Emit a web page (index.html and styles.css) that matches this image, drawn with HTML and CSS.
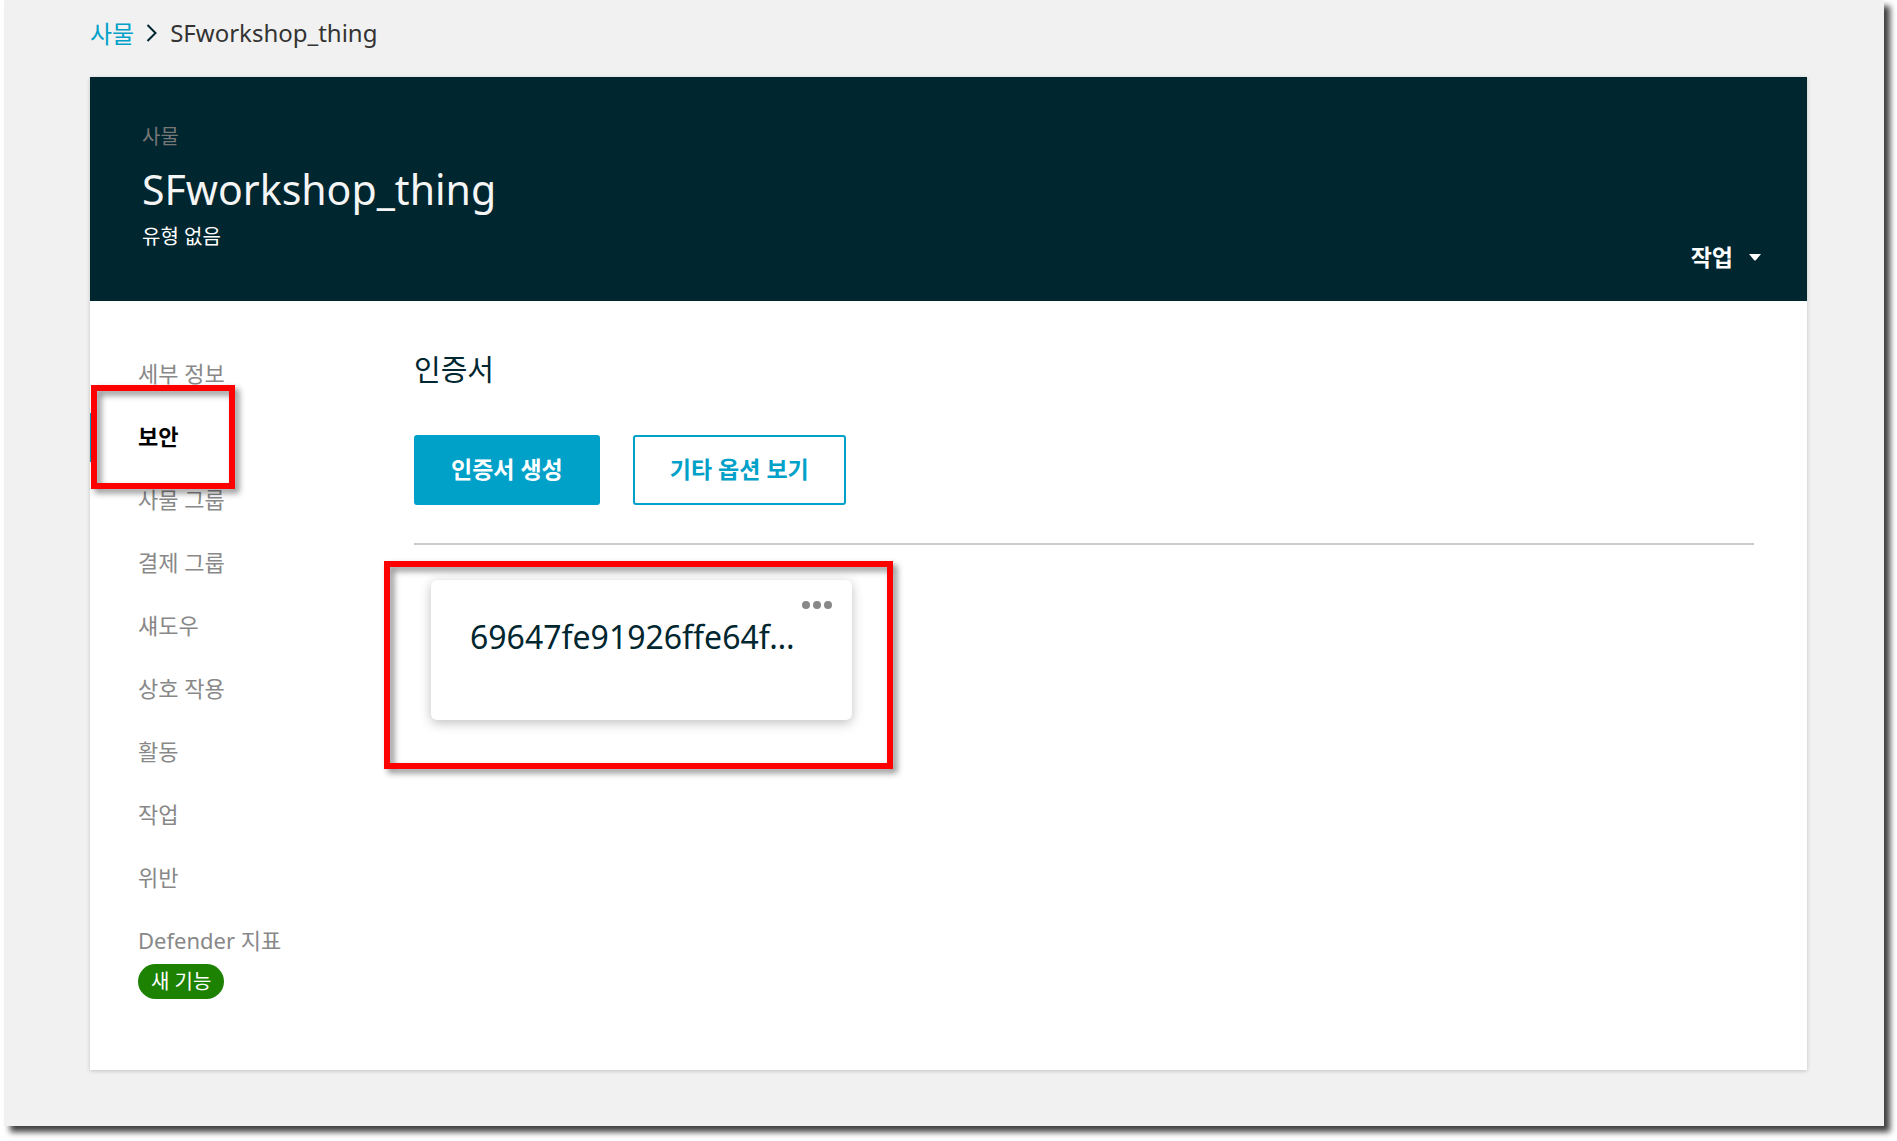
FILE: index.html
```html
<!DOCTYPE html>
<html lang="ko">
<head>
<meta charset="utf-8">
<meta name="viewport" content="width=device-width, initial-scale=1">
<title>SFworkshop_thing</title>
<link rel="stylesheet" href="styles.css">
</head>
<body>
<div class="frame">
  <nav class="breadcrumb" aria-label="이동 경로">
    <a href="#">사물</a>
    <svg class="chevron" viewBox="0 0 12 20" aria-hidden="true"><path d="M1.5 2 L9.5 10 L1.5 18"/></svg>
    <span>SFworkshop_thing</span>
  </nav>
  <main class="panel">
    <header class="hero">
      <div>
        <p class="hero-kind">사물</p>
        <h1 class="hero-title">SFworkshop_thing</h1>
        <p class="hero-type">유형 없음</p>
      </div>
      <button class="actions" type="button">작업
        <svg class="caret" viewBox="0 0 12 7" aria-hidden="true"><path d="M0 0H12L7 6Q6 7 5 6Z"/></svg>
      </button>
    </header>
    <div class="panel-body">
      <nav class="side" aria-label="사물 메뉴">
        <ul>
          <li><a href="#">세부 정보</a></li>
          <li class="active"><a href="#" aria-current="page">보안</a><span class="highlight highlight-nav"></span></li>
          <li><a href="#">사물 그룹</a></li>
          <li><a href="#">결제 그룹</a></li>
          <li><a href="#">섀도우</a></li>
          <li><a href="#">상호 작용</a></li>
          <li><a href="#">활동</a></li>
          <li><a href="#">작업</a></li>
          <li><a href="#">위반</a></li>
          <li><a href="#">Defender 지표</a><span class="badge">새 기능</span></li>
        </ul>
      </nav>
      <section class="content">
        <h2>인증서</h2>
        <div class="buttons">
          <button class="btn btn-primary" type="button">인증서 생성</button>
          <button class="btn btn-outline" type="button">기타 옵션 보기</button>
        </div>
        <div class="cards">
          <article class="card">
            <button class="more" type="button" aria-label="메뉴">
              <svg viewBox="0 0 30 8" aria-hidden="true"><circle cx="4" cy="4" r="4"/><circle cx="15" cy="4" r="4"/><circle cx="26" cy="4" r="4"/></svg>
            </button>
            <a class="card-name" href="#">69647fe91926ffe64f…</a>
            <span class="highlight highlight-card"></span>
          </article>
        </div>
      </section>
    </div>
  </main>
</div>
</body>
</html>
```
FILE: styles.css
```css
* { box-sizing: border-box; }

body {
  margin: 0;
  background: #fff;
  color: #00262f;
  font-family: "Noto Sans", "Noto Sans CJK KR", sans-serif;
  font-size: 22px;
}

h1, h2, p, ul { margin: 0; padding: 0; font-weight: 400; }
ul { list-style: none; }
a { color: inherit; text-decoration: none; }
button { font: inherit; cursor: pointer; }

.frame {
  margin: 0 13px 16px 4px;
  padding: 0 77px 56px 86px;
  background: #f1f1f1;
  box-shadow: 6px 6px 6px rgba(0, 0, 0, 0.75);
}

.breadcrumb {
  display: flex;
  align-items: center;
  gap: 12px;
  height: 77px;
  padding-bottom: 12px;
  color: #333;
  font-size: 24px;
}
.breadcrumb a { color: #00a1c9; }
.chevron {
  width: 12px;
  height: 20px;
  fill: none;
  stroke: #00262f;
  stroke-width: 2;
}

.panel {
  background: #fff;
  box-shadow: 0 1px 4px rgba(0, 0, 0, 0.2);
}

.hero {
  display: flex;
  justify-content: space-between;
  align-items: flex-end;
  min-height: 224px;
  padding: 44px 46px 28px 52px;
  background: #00262f;
  color: #fff;
}
.hero-kind { color: #777; font-size: 20px; line-height: 32px; }
.hero-title { color: #f5f5f5; font-size: 41px; line-height: 72px; }
.hero-type { font-size: 20px; line-height: 24px; padding-bottom: 24px; }
.actions {
  display: flex;
  align-items: center;
  gap: 16px;
  padding: 0;
  border: 0;
  background: none;
  color: #fff;
  font-size: 23px;
  font-weight: 700;
  line-height: 32px;
}
.caret { width: 12px; height: 7px; fill: #fff; }

.panel-body { display: flex; padding: 41px 53px 71px 0; }

.side { flex: 0 0 324px; color: #888; }
.side li {
  position: relative;
  min-height: 63px;
  padding: 15px 0 0 48px;
  line-height: 32px;
}
.side a { display: block; }
.side .active { color: #000; font-weight: 700; }
.side .active::before {
  content: "";
  position: absolute;
  left: 0;
  top: 8px;
  width: 5px;
  height: 49px;
  background: #00a1c9;
}
.badge {
  display: inline-block;
  margin-top: 8px;
  padding: 0 13px;
  border-radius: 18px;
  background: #1d8102;
  color: #fff;
  font-size: 20px;
  line-height: 35px;
}

.content { flex: 1; min-width: 0; }
.content h2 { font-size: 29px; line-height: 56px; }
.buttons {
  display: flex;
  gap: 33px;
  padding: 37px 0 38px;
  border-bottom: 2px solid #ccc;
}
.btn {
  height: 70px;
  padding: 0 35px 4px;
  border: 2px solid #00a1c9;
  border-radius: 3px;
  font-weight: 700;
  font-size: 23px;
}
.btn-primary { background: #00a1c9; color: #fff; }
.btn-outline { background: #fff; color: #00a1c9; }

.cards { padding: 35px 17px; }
.card {
  position: relative;
  display: flex;
  flex-direction: column;
  max-width: 421px;
  min-height: 140px;
  padding: 21px 20px 0 39px;
  border-radius: 6px;
  background: #fff;
  box-shadow: 0 3px 12px rgba(0, 0, 0, 0.25);
}
.more {
  align-self: flex-end;
  display: flex;
  padding: 0;
  border: 0;
  background: none;
}
.more svg { width: 30px; height: 8px; fill: #888; }
.card-name { font-size: 32px; line-height: 56px; }

.highlight {
  position: absolute;
  border: 6px solid #f00;
  pointer-events: none;
  filter: drop-shadow(4px 4px 3px rgba(0, 0, 0, 0.45));
}
.highlight-nav { left: 1px; top: -20px; width: 144px; height: 104px; z-index: 1; }
.highlight-card { inset: -19px -41px -49px -47px; }
```
